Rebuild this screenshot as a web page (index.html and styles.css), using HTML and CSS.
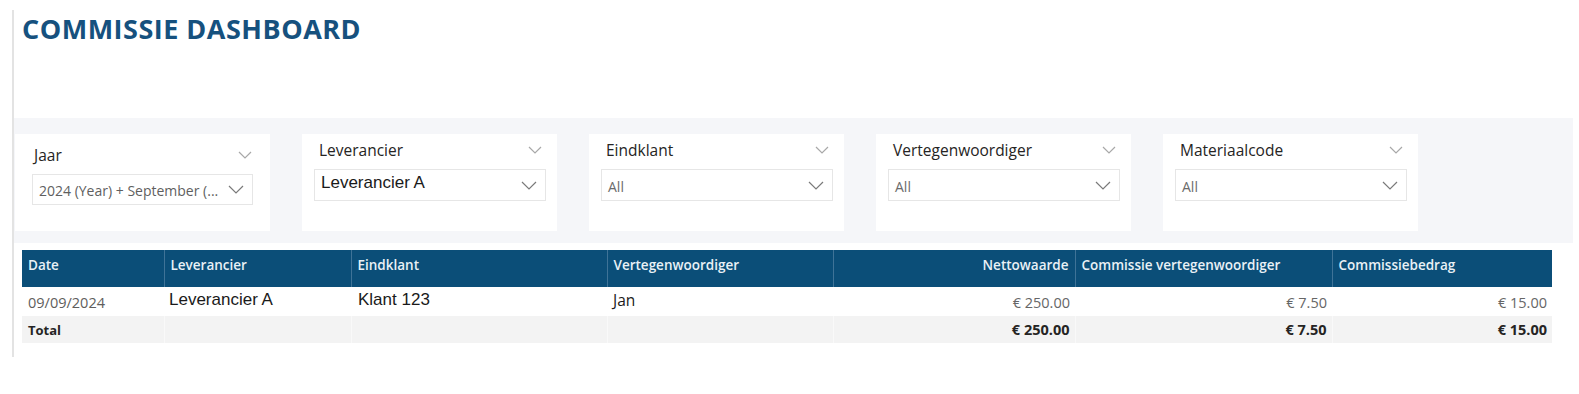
FILE: index.html
```html
<!DOCTYPE html>
<html lang="nl">
<head>
<meta charset="utf-8">
<title>Commissie Dashboard</title>
<link rel="stylesheet" href="styles.css">
</head>
<body>
<div class="canvas">
  <h1 class="title">COMMISSIE DASHBOARD</h1>

  <div class="filters">
    <div class="slicer slicer--jaar">
      <div class="slicer-head">
        <span class="slicer-label">Jaar</span>
        <svg class="chev-small" viewBox="0 0 14 8"><polyline points="1,1 7,7 13,1"/></svg>
      </div>
      <div class="dropdown">
        <span class="dd-value dd-value--muted">2024 (Year) + September (...</span>
        <svg class="chev" viewBox="0 0 16 9"><polyline points="1,1 8,8 15,1"/></svg>
      </div>
    </div>

    <div class="slicer">
      <div class="slicer-head">
        <span class="slicer-label">Leverancier</span>
        <svg class="chev-small" viewBox="0 0 14 8"><polyline points="1,1 7,7 13,1"/></svg>
      </div>
      <div class="dropdown">
        <span class="dd-value dd-value--strong">Leverancier A</span>
        <svg class="chev" viewBox="0 0 16 9"><polyline points="1,1 8,8 15,1"/></svg>
      </div>
    </div>

    <div class="slicer">
      <div class="slicer-head">
        <span class="slicer-label">Eindklant</span>
        <svg class="chev-small" viewBox="0 0 14 8"><polyline points="1,1 7,7 13,1"/></svg>
      </div>
      <div class="dropdown">
        <span class="dd-value">All</span>
        <svg class="chev" viewBox="0 0 16 9"><polyline points="1,1 8,8 15,1"/></svg>
      </div>
    </div>

    <div class="slicer">
      <div class="slicer-head">
        <span class="slicer-label">Vertegenwoordiger</span>
        <svg class="chev-small" viewBox="0 0 14 8"><polyline points="1,1 7,7 13,1"/></svg>
      </div>
      <div class="dropdown">
        <span class="dd-value">All</span>
        <svg class="chev" viewBox="0 0 16 9"><polyline points="1,1 8,8 15,1"/></svg>
      </div>
    </div>

    <div class="slicer">
      <div class="slicer-head">
        <span class="slicer-label">Materiaalcode</span>
        <svg class="chev-small" viewBox="0 0 14 8"><polyline points="1,1 7,7 13,1"/></svg>
      </div>
      <div class="dropdown">
        <span class="dd-value">All</span>
        <svg class="chev" viewBox="0 0 16 9"><polyline points="1,1 8,8 15,1"/></svg>
      </div>
    </div>
  </div>

  <table class="grid">
    <colgroup>
      <col class="c-date"><col class="c-lev"><col class="c-eind"><col class="c-vert">
      <col class="c-netto"><col class="c-comv"><col class="c-comb">
    </colgroup>
    <thead>
      <tr class="head">
        <th>Date</th>
        <th>Leverancier</th>
        <th>Eindklant</th>
        <th>Vertegenwoordiger</th>
        <th class="num">Nettowaarde</th>
        <th>Commissie vertegenwoordiger</th>
        <th>Commissiebedrag</th>
      </tr>
    </thead>
    <tbody>
      <tr class="row">
        <td class="date">09/09/2024</td>
        <td class="txt">Leverancier A</td>
        <td class="txt txt--wide">Klant 123</td>
        <td class="txt2">Jan</td>
        <td class="num">€ 250.00</td>
        <td class="num">€ 7.50</td>
        <td class="num">€ 15.00</td>
      </tr>
      <tr class="total">
        <td>Total</td>
        <td></td>
        <td></td>
        <td></td>
        <td class="num">€ 250.00</td>
        <td class="num">€ 7.50</td>
        <td class="num">€ 15.00</td>
      </tr>
    </tbody>
  </table>
</div>
</body>
</html>
```

FILE: styles.css
```css
html, body {
  margin: 0;
  padding: 0;
  background: #ffffff;
}

body {
  font-family: "Open Sans", "Noto Sans", sans-serif;
  color: #252423;
}

.canvas {
  margin-top: 10px;
  margin-left: 12px;
  height: 347px;
  border-left: 2px solid #e3e3e3;
  box-sizing: border-box;
}

.title {
  margin: 0;
  height: 108px;
  box-sizing: border-box;
  padding: 4px 0 0 8px;
  font-family: "Open Sans", sans-serif;
  font-weight: 700;
  font-size: 27px;
  line-height: 30px;
  color: #16517e;
  letter-spacing: 0.5px;
}

.filters {
  width: 1559px;
  height: 125px;
  box-sizing: border-box;
  background: #f5f6f9;
  display: flex;
  gap: 32px;
  padding: 16px 0 0 1px;
}

.slicer {
  width: 255px;
  height: 97px;
  box-sizing: border-box;
  background: #ffffff;
  padding: 6px 11px 0 12px;
  display: flex;
  flex-direction: column;
  gap: 9px;
}

.slicer--jaar {
  padding: 11px 17px 0 17px;
}

.slicer-head {
  display: flex;
  align-items: center;
  justify-content: space-between;
  height: 20px;
  padding: 0 4px 0 5px;
}

.slicer--jaar .slicer-head {
  padding: 0 1px 0 2px;
}

.slicer-label {
  font-size: 15.5px;
  line-height: 20px;
  color: #252423;
}

.chev-small {
  width: 14px;
  height: 8px;
  fill: none;
  stroke: #a8a8a8;
  stroke-width: 1.2;
}

.dropdown {
  height: 32px;
  box-sizing: border-box;
  border: 1px solid #e6e6e6;
  display: flex;
  align-items: center;
  justify-content: space-between;
  padding: 0 8px 0 6px;
}

.slicer--jaar .dropdown {
  height: 31px;
}

.dd-value {
  font-size: 14px;
  color: #6b6b6b;
  padding-top: 2px;
}

.dd-value--muted {
  font-size: 14px;
  color: #5f5f5f;
  padding-top: 2px;
}

.dd-value--strong {
  font-family: "Liberation Sans", Arial, sans-serif;
  font-size: 17px;
  color: #1a1a1a;
  padding-top: 0;
  margin-top: -4px;
}

.chev {
  width: 16px;
  height: 9px;
  fill: none;
  stroke: #7a7a7a;
  stroke-width: 1.2;
}

.grid {
  margin: 7px 0 0 8px;
  width: 1530px;
  table-layout: fixed;
  border-collapse: collapse;
}

.c-date { width: 142px; }
.c-lev { width: 187px; }
.c-eind { width: 256px; }
.c-vert { width: 226px; }
.c-netto { width: 242px; }
.c-comv { width: 257px; }
.c-comb { width: 220px; }

.head {
  height: 37px;
}

.grid th {
  background: #0b4e78;
  color: #e9f1f6;
  font-weight: 600;
  font-size: 13.5px;
  text-align: left;
  vertical-align: top;
  padding: 6px 6px 0 6px;
  border-left: 1px solid #3f7397;
  line-height: 18px;
  white-space: nowrap;
}

.grid th:first-child {
  border-left: none;
}

.grid th.num {
  text-align: right;
  padding-right: 6px;
}

.grid td {
  font-size: 14px;
  padding: 0 5px 0 6px;
  white-space: nowrap;
  line-height: 20px;
}

.row {
  height: 29px;
}

.row td {
  background: #ffffff;
  vertical-align: middle;
}

.row td.date {
  font-size: 14.5px;
  color: #605e5c;
  padding-top: 2px;
}

.row td.txt {
  font-family: "Liberation Sans", Arial, sans-serif;
  font-size: 17px;
  color: #1a1a1a;
  padding-left: 5px;
  padding-bottom: 4px;
}

.row td.txt--wide {
  padding-left: 7px;
}

.row td.txt2 {
  font-size: 15.5px;
  color: #1a1a1a;
  padding-bottom: 4px;
}

.row td.num {
  font-size: 14.5px;
  color: #666666;
  text-align: right;
  padding-top: 2px;
}

.total {
  height: 27px;
}

.total td {
  background: #f3f3f3;
  font-weight: 700;
  font-size: 13px;
  color: #252423;
  border-left: 1px solid #f9f9f9;
}

.total td:first-child {
  border-left: none;
}

.total td.num {
  font-size: 14.5px;
  text-align: right;
}
```
